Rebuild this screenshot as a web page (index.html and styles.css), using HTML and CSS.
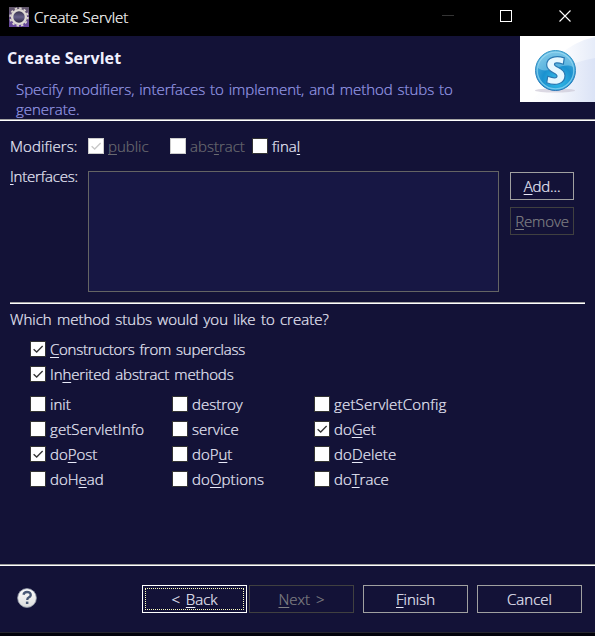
FILE: index.html
```html
<!DOCTYPE html>
<html lang="en">
<head>
<meta charset="utf-8">
<title>Create Servlet</title>
<link rel="stylesheet" href="styles.css">
</head>
<body>
<div class="window">
  <header class="titlebar">
    <svg class="app-icon" width="20" height="20" viewBox="0 0 20 20">
      <defs><linearGradient id="app" x1="0" y1="0" x2="0" y2="1"><stop offset="0" stop-color="#62586b"/><stop offset="1" stop-color="#6848a0"/></linearGradient>
      <linearGradient id="hole" x1="0" y1="0" x2="0" y2="1"><stop offset="0" stop-color="#2c2740"/><stop offset=".5" stop-color="#66618a"/><stop offset="1" stop-color="#211b38"/></linearGradient></defs>
      <rect width="20" height="20" fill="url(#app)"/>
      <circle cx="10" cy="10" r="8.800" fill="none" stroke="#dcd6d0" stroke-width="1.800" stroke-dasharray="2.4 2.208"/>
      <circle cx="10" cy="10" r="6.900" fill="url(#hole)" stroke="#dedad4" stroke-width="2.300"/>
    </svg>
    <span class="caption">Create Servlet</span>
    <svg class="controls" width="130" height="20" viewBox="0 0 130 20" fill="none">
      <path d="M0 8.5h12" stroke="#343434"/>
      <rect x="58.5" y="3.5" width="11" height="11" stroke="#fff"/>
      <path d="M117.5 3.500l11 11M128.500 3.500l-11 11" stroke="#fff" stroke-width="1.1"/>
    </svg>
  </header>

  <section class="banner">
    <div class="banner-text">
      <h1>Create Servlet</h1>
      <p>Specify modifiers, interfaces to implement, and method stubs to<br>generate.</p>
    </div>
    <svg class="banner-art" width="75" height="66" viewBox="0 0 75 66">
      <defs>
        <linearGradient id="paper" x1="0" y1="0" x2="1" y2="0"><stop offset="0" stop-color="#fff"/><stop offset=".3" stop-color="#fafbfe"/><stop offset="1" stop-color="#dbe3f6"/></linearGradient>
        <linearGradient id="swoop" x1="0" y1="0" x2="1" y2="0"><stop offset="0" stop-color="#fff"/><stop offset="1" stop-color="#e6ecf9"/></linearGradient>
        <radialGradient id="ball" cx=".55" cy=".75" r=".75"><stop offset="0" stop-color="#35c0ec"/><stop offset=".5" stop-color="#1b91cf"/><stop offset="1" stop-color="#58b4df"/></radialGradient>
        <linearGradient id="rim" x1="0" y1="0" x2="0" y2="1"><stop offset="0" stop-color="#3b9bc9"/><stop offset="1" stop-color="#2a73b4"/></linearGradient>
      </defs>
      <rect width="75" height="66" fill="#fff"/>
      <path d="M10 66C30 45 44 25 75 20V66z" fill="url(#paper)"/>
      <path d="M38 20Q55 5 75 1V22Q57 25 45 32z" fill="url(#swoop)"/>
      <ellipse cx="35" cy="54.500" rx="20" ry="2" fill="#c9c4d4" opacity=".65"/>
      <circle cx="35.500" cy="34.500" r="20" fill="url(#ball)" stroke="url(#rim)"/>
      <circle cx="35.500" cy="34.500" r="18.300" fill="none" stroke="#8fd6f2" stroke-width="1.300" opacity=".75"/>
      <path d="M18 32a17.500 16 0 0 1 35-1C43 25 27 40 18 32z" fill="#b4e3f5" opacity=".4"/>
      <path d="M44.300 21.800L43.300 28.300Q34.500 25.300 34.500 28.500C34.500 31.500 45 31.500 45 39.500C45 48.500 35 50 26.700 46.800L27.700 40.300Q37 43.500 37 40C37 36.500 26.700 36.500 26.700 29C26.700 20.500 36.500 19.500 44.300 21.800z" fill="#e6f7ff" stroke="#2a78b2" stroke-width="1.200"/>
    </svg>
  </section>

  <main class="page">
    <div class="modifiers">
      <span class="row-label">Modifiers:</span>
      <span class="check off"><svg class="box" viewBox="0 0 16 16"><path d="M3 8.200l3.500 3.300L13.300 4.500"/></svg><span><u>p</u>ublic</span></span>
      <span class="check off"><i class="box"></i><span>abs<u>t</u>ract</span></span>
      <span class="check"><i class="box"></i><span>fina<u>l</u></span></span>
    </div>
    <div class="interfaces">
      <span class="row-label"><u>I</u>nterfaces:</span>
      <div class="list"></div>
      <div class="side">
        <button class="add"><u>A</u>dd...</button>
        <button class="disabled"><u>R</u>emove</button>
      </div>
    </div>
    <div class="rule"></div>
    <p class="question">Which method stubs would you like to create?</p>
    <div class="general">
      <span class="check tight"><svg class="box" viewBox="0 0 16 16"><path d="M3 8.200l3.500 3.300L13.300 4.500"/></svg><span><u>C</u>onstructors from superclass</span></span>
      <span class="check snug"><svg class="box" viewBox="0 0 16 16"><path d="M3 8.200l3.500 3.300L13.300 4.500"/></svg><span>In<u>h</u>erited abstract methods</span></span>
    </div>
    <div class="stubs">
      <span class="check"><i class="box"></i><span>init</span></span>
      <span class="check"><i class="box"></i><span>destroy</span></span>
      <span class="check wide"><i class="box"></i><span>getServletConfig</span></span>
      <span class="check loose"><i class="box"></i><span>getServletInfo</span></span>
      <span class="check"><i class="box"></i><span>service</span></span>
      <span class="check"><svg class="box" viewBox="0 0 16 16"><path d="M3 8.200l3.500 3.300L13.300 4.500"/></svg><span>do<u>G</u>et</span></span>
      <span class="check"><svg class="box" viewBox="0 0 16 16"><path d="M3 8.200l3.500 3.300L13.300 4.500"/></svg><span>do<u>P</u>ost</span></span>
      <span class="check"><i class="box"></i><span>doP<u>u</u>t</span></span>
      <span class="check loose"><i class="box"></i><span>do<u>D</u>elete</span></span>
      <span class="check"><i class="box"></i><span>doH<u>e</u>ad</span></span>
      <span class="check loose"><i class="box"></i><span>do<u>O</u>ptions</span></span>
      <span class="check"><i class="box"></i><span>do<u>T</u>race</span></span>
    </div>
  </main>

  <footer class="footer">
    <svg class="help" width="22" height="22" viewBox="0 0 22 22">
      <defs><linearGradient id="h" x1="0" y1="0" x2="0" y2="1"><stop offset="0" stop-color="#fff"/><stop offset="1" stop-color="#dcdcdc"/></linearGradient></defs>
      <circle cx="11" cy="11" r="9.400" fill="url(#h)" stroke="#8e96a5" stroke-width=".8"/>
      <path d="M7.500 7.800Q8 5 11 5c4.200 0 4.800 3.800 2 5.300q-1.800 1-1.800 2.700" fill="none" stroke="#4b5a77" stroke-width="2.300"/>
      <rect x="9.900" y="14.600" width="2.500" height="2.400" fill="#4b5a77"/>
    </svg>
    <button class="default"><span>&lt; <u>B</u>ack</span></button>
    <button class="disabled next"><span><u>N</u>ext &gt;</span></button>
    <button><span><u>F</u>inish</span></button>
    <button><span>Cancel</span></button>
  </footer>
  <div class="edge"></div>
</div>
</body>
</html>
```

FILE: styles.css
```css
* { box-sizing: border-box; }
body { margin: 0; background: #02020c; }
.window {
  width: 595px; height: 636px; display: flex; flex-direction: column;
  background: #131237; color: #e8e9f8; overflow: hidden;
  font: 300 15px/20px "Open Sans", "Noto Sans", sans-serif;
  -webkit-text-stroke: .22px currentColor;
  white-space: nowrap;
}
h1, p { margin: 0; }
u { text-decoration: underline; text-decoration-thickness: 1px; text-underline-offset: 2px; text-decoration-skip-ink: none; }

.titlebar { height: 36px; flex: none; display: flex; align-items: center; padding: 0 23px 2px 9px; background: #000; color: #fff; }
.caption { margin-left: 5px; }
.controls { margin-left: auto; }

.banner { height: 85px; flex: none; display: flex; justify-content: space-between; border-bottom: 1px solid #fff; box-shadow: inset 0 -1px #a3a3a3; }
.banner-text { padding: 12px 0 0 7px; }
h1 { font-size: 16px; line-height: 20px; font-weight: 700; color: #f0f0ff; letter-spacing: .08px; -webkit-text-stroke: 0; }
.banner p { padding: 11px 0 0 9px; color: #979ae6; line-height: 20px; letter-spacing: -.02px; word-spacing: 1px; }
.banner-art { flex: none; }

.page { height: 443px; flex: none; padding: 15px 10px 0; }
.modifiers { display: grid; grid-template-columns: 78px 82px 82px 1fr; height: 20px; }
.modifiers .row-label { letter-spacing: .08px; }
.check { display: flex; align-items: center; gap: 4px; height: 20px; }
.tight { letter-spacing: -.25px; word-spacing: 1.5px; }
.snug { letter-spacing: -.12px; word-spacing: 1.4px; }
.wide { letter-spacing: .19px; }
.loose { letter-spacing: .1px; }
.box { width: 16px; height: 16px; flex: none; background: #fff; border: 1px solid #333; }
.box path { fill: none; stroke: #333; stroke-width: 1.5; }
.off { color: #6a6a70; }
.off .box { border-color: #ccc; }
.off .box path { stroke: #c8c8c8; }

.interfaces { display: grid; grid-template-columns: 78px 411px 64px; margin-top: 15px; }
.interfaces .row-label { margin-top: -5px; letter-spacing: -.2px; }
.list { height: 121px; border: 1px solid #646464; background: #171744; }
.side { display: flex; flex-direction: column; gap: 7px; margin: 1px -11px 0 11px; }
button { width: 105px; height: 28px; padding: 0 0 1px; border: 1px solid #a0a0a0; border-radius: 0; background: none; color: #e8e9f8; font: inherit; text-align: center; word-spacing: 2px; -webkit-text-stroke: .22px currentColor; }
.side button { width: 64px; }
.side .add { letter-spacing: -.15px; }
.disabled { border-color: #404040; color: #808084; }
.side .disabled { letter-spacing: -.1px; }
.rule { height: 2px; margin-top: 10px; background: #fff; border-top: 1px solid #a3a3a3; }
.question { margin-top: 5px; word-spacing: 1.4px; }
.general { margin: 10px 0 0 20px; display: grid; gap: 5px; }
.stubs { margin: 10px 0 0 20px; display: grid; grid-template-columns: 142px 142px 1fr; gap: 5px 0; }

.footer { flex: 1; display: flex; align-items: flex-start; padding: 20px 13px 0 16px; border-top: 1px solid #9b9b9b; box-shadow: inset 0 1px #fff; }
.help { margin: 2px auto 0 0; }
.footer button + button { margin-left: 9px; }
.footer button.next { margin-left: 2px; }
.footer .default { border-color: #fff; padding: 2px 2px 3px; }
.default span { display: block; height: 22px; border: 1px dotted #ffffc0; line-height: 20px; }
.edge { height: 4px; flex: none; background: #02020c; border-top: 1px solid #262630; }
```
